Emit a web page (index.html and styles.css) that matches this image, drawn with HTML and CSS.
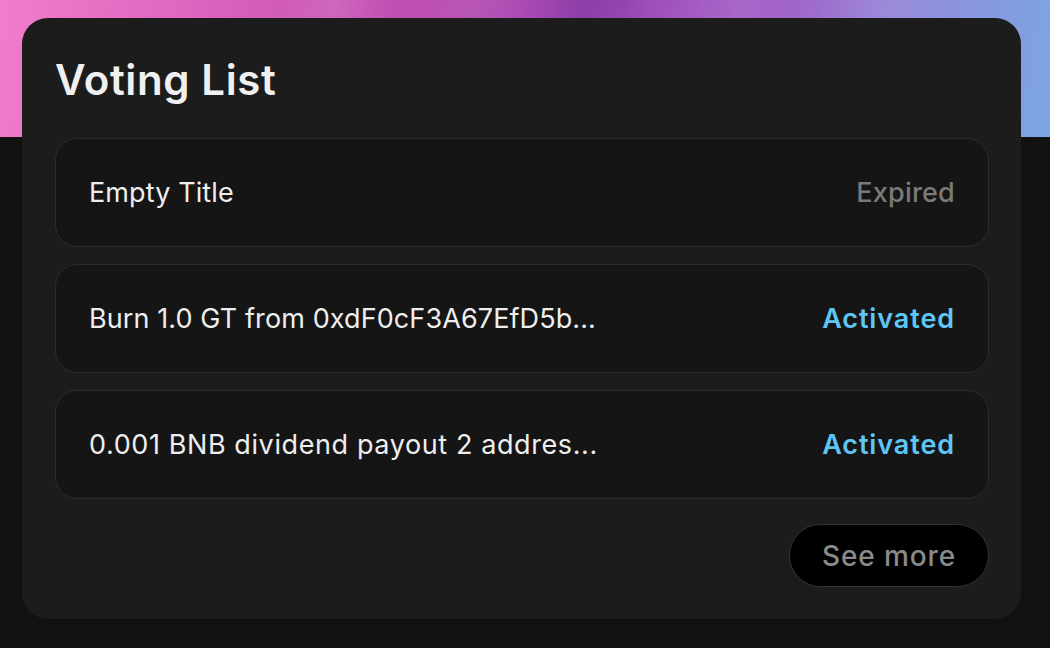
FILE: index.html
```html
<!DOCTYPE html>
<html lang="en">
<head>
  <meta charset="UTF-8">
  <title>Voting List</title>
  <meta name="viewport" content="width=device-width, initial-scale=1.0">
  <link rel="stylesheet" href="styles.css">
</head>
<body>
  <div class="banner"></div>

  <main class="page">
    <section class="card">
      <h1 class="card-title">Voting List</h1>

      <ul class="vote-list">
        <li class="vote-row">
          <span class="vote-name">Empty Title</span>
          <span class="vote-status expired">Expired</span>
        </li>
        <li class="vote-row">
          <span class="vote-name">Burn 1.0 GT from 0xdF0cF3A67EfD5b...</span>
          <span class="vote-status active">Activated</span>
        </li>
        <li class="vote-row">
          <span class="vote-name wide">0.001 BNB dividend payout 2 addres...</span>
          <span class="vote-status active">Activated</span>
        </li>
      </ul>

      <div class="card-footer">
        <button class="more-button">See more</button>
      </div>
    </section>
  </main>
</body>
</html>
```

FILE: styles.css
```css
html, body {
  margin: 0;
  padding: 0;
}

body {
  background: #111;
  color: #f2f2f2;
  font-family: "Inter", "Noto Sans", sans-serif;
  min-height: 648px;
  position: relative;
}

/* gradient strip behind the top of the card */
.banner {
  height: 137px;
  background:
    linear-gradient(105deg,
      rgba(255,255,255,0) 26%,
      rgba(255,255,255,0.10) 31%,
      rgba(255,255,255,0) 36%,
      rgba(255,255,255,0.06) 44%,
      rgba(255,255,255,0) 48%,
      rgba(60,20,120,0.22) 54%,
      rgba(60,20,120,0) 60%,
      rgba(255,255,255,0.08) 68%,
      rgba(255,255,255,0) 74%,
      rgba(255,255,255,0.08) 82%,
      rgba(255,255,255,0) 88%),
    linear-gradient(100deg, #f27ccc 0%, #d860bc 22%, #bb4cb0 40%, #9c4ab8 58%, #a25ec8 72%, #8c92dc 88%, #7ca6e2 100%);
}

.page {
  position: absolute;
  top: 18px;
  left: 22px;
  width: 999px;
}

.card {
  background: #1c1c1c;
  border-radius: 26px;
  padding: 33px 32px 32px 33px;
}

.card-title {
  margin: 0 0 29px;
  font-size: 42px;
  font-weight: 600;
  line-height: 58px;
  letter-spacing: 0.6px;
  color: #f0f0f0;
}

.vote-list {
  list-style: none;
  margin: 0;
  padding: 0;
  display: flex;
  flex-direction: column;
  gap: 17px;
}

.vote-row {
  height: 107px;
  box-sizing: content-box;
  background: #151515;
  border: 1px solid #2c2c2c;
  border-radius: 22px;
  padding: 0 33px;
  display: flex;
  align-items: center;
  justify-content: space-between;
  font-size: 27px;
}

.vote-name {
  color: #eeeeee;
  font-weight: 400;
  letter-spacing: 0.1px;
}

.vote-name.wide {
  letter-spacing: 0.6px;
}

.vote-status {
  font-weight: 500;
}

.vote-status.expired {
  color: #7a7a7a;
  letter-spacing: 0.2px;
}

.vote-status.active {
  color: #5ec6f4;
  font-weight: 600;
  letter-spacing: 0.9px;
}

.card-footer {
  display: flex;
  justify-content: flex-end;
  margin-top: 25px;
}

.more-button {
  width: 200px;
  height: 63px;
  border-radius: 32px;
  border: 1px solid #333;
  background: #000;
  color: #8a8a8a;
  font-family: inherit;
  font-size: 28px;
  font-weight: 500;
  letter-spacing: 0.9px;
  cursor: pointer;
}
```
